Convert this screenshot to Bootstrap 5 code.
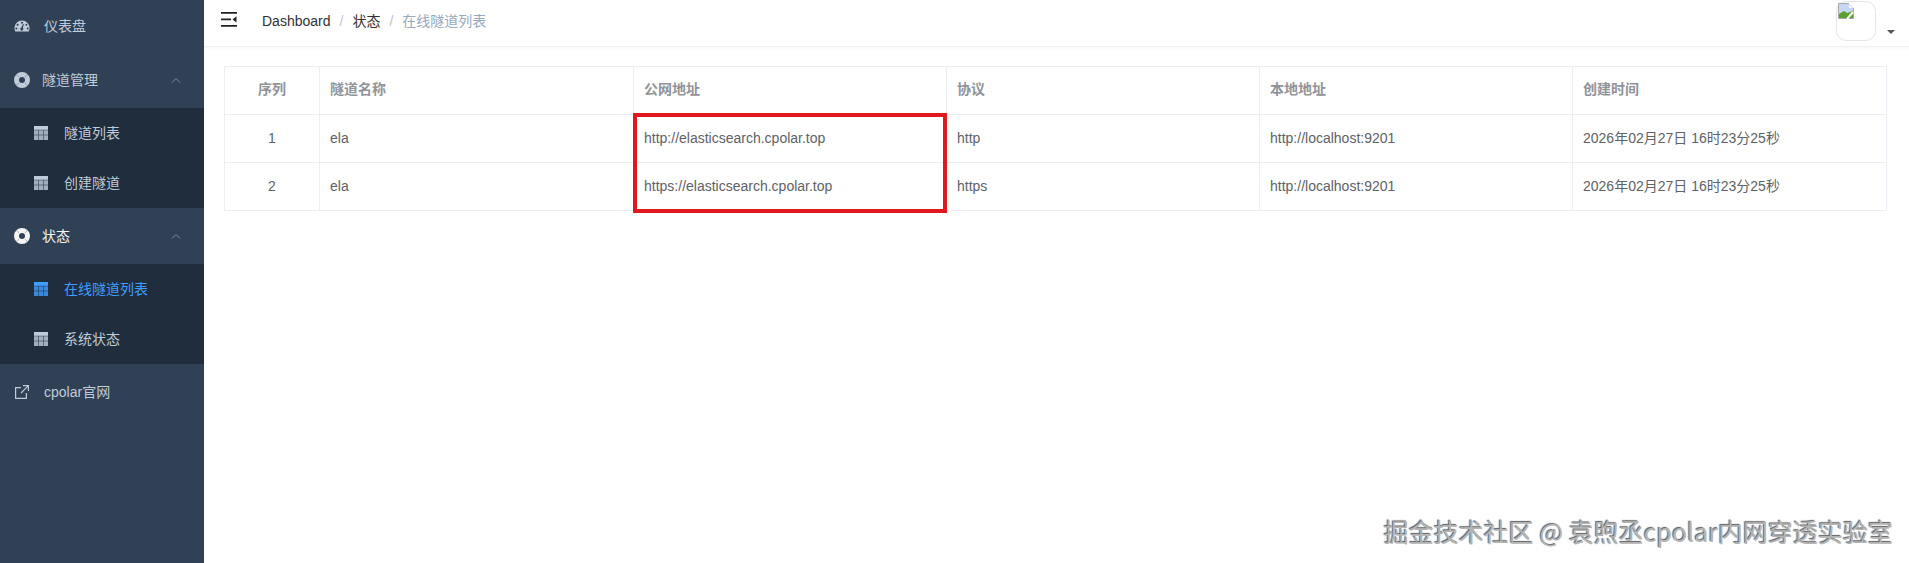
<!DOCTYPE html>
<html lang="zh-CN">
<head>
    <meta charset="UTF-8">
    <meta name="viewport" content="width=device-width, initial-scale=1.0">
    <title>在线隧道列表</title>
    <link href="https://cdn.jsdelivr.net/npm/bootstrap@5.3.0/dist/css/bootstrap.min.css" rel="stylesheet">
    <style>
        html, body { height: 100%; overflow: hidden; }
        body { font-family: "Liberation Sans", "Noto Sans CJK SC", sans-serif; font-size: 14px; color: #606266; }
        .app-shell { height: 563px; position: relative; }
        .side-menu { width: 204px; background: #304156; color: #bfcbd9; flex: none; }
        .side-item { height: 56px; padding-left: 14px; color: #bfcbd9; text-decoration: none; }
        .side-item.first-item { height: 52px; }
        .side-item svg { width: 16px; height: 16px; margin-right: 14px; fill: currentColor; flex: none; }
        .side-group svg { margin-right: 12px; }
        .side-group.open-now { color: #f4f4f5; }
        .side-ring-cut { stroke: #304156; stroke-width: .9; opacity: .4; }
        .side-chevron { width: 10px !important; height: 6px !important; margin: 0 23px 0 auto !important; fill: none !important; stroke: #7d8b9b; stroke-width: 1; }
        .side-sub { background: #1f2d3d; }
        .side-sub a { height: 50px; padding-left: 34px; color: #bfcbd9; text-decoration: none; }
        .side-sub a svg { width: 14px; height: 14px; margin-right: 16px; flex: none; }
        .side-sub a svg .grid-cells { fill: currentColor; opacity: .82; }
        .side-sub a svg .grid-head { fill: currentColor; }
        .side-sub a.is-active { color: #409eff; }
        .top-strip { height: 47px; border-bottom: 1px solid #f0f1f3; box-shadow: 0 1px 3px rgba(0, 21, 41, .04); padding-left: 17px; }
        .fold-icon { width: 16px; height: 16px; margin: 11px 25px 0 0; }
        .crumbs { margin-top: 11px; }
        .crumbs .breadcrumb-item { font-size: 14px; color: #97a8be; }
        .crumbs .breadcrumb-item a { color: #303133; text-decoration: none; }
        .crumbs .breadcrumb-item + .breadcrumb-item { padding-left: 9px; }
        .crumbs .breadcrumb-item + .breadcrumb-item::before { color: #c0c4cc; padding-right: 9px; }
        .avatar-box { width: 40px; height: 40px; border: 1px solid #e2e4e6; border-radius: 10px; margin-top: 1px; padding: 1px 0 0 1px; }
        .avatar-box svg { display: block; width: 16px; height: 16px; }
        .avatar-caret { border-top: 4px solid #555; border-left: 4px solid transparent; border-right: 4px solid transparent; margin: 30px 15px 0 11px; }
        .tunnel-wrap { padding: 19px 23px 0 20px; position: relative; }
        .tunnel-table { table-layout: fixed; width: 1662px; margin: 0; border-color: #ebeef5; color: #606266; }
        .tunnel-table th, .tunnel-table td { height: 48px; padding: 0 10px; vertical-align: middle; font-size: 14px; font-weight: 400; color: #606266; }
        .tunnel-table th { color: #909399; font-weight: 700; padding-bottom: 2px; }
        .red-frame { position: absolute; left: 429px; top: 66px; width: 314px; height: 100px; border: 4px solid #e1191f; }
        .site-mark { position: absolute; right: 16px; bottom: 18px; font-family: "Noto Sans CJK SC", sans-serif; font-size: 25px; line-height: 28px; color: #b4b4b4; text-shadow: -1px -1px 1px #5e5e5e; }
    </style>
</head>
<body>
<div class="app-shell d-flex">
    <aside class="side-menu">
        <a href="#" class="side-item first-item d-flex align-items-center">
            <svg viewBox="0 0 16 16"><path d="M8 2.5a7.6 7.6 0 0 0-7.6 7.6c0 1.300.3 2.400.9 3.400h13.400c.6-1 .9-2.100.9-3.400A7.600 7.600 0 0 0 8 2.500zm0 1.300a1 1 0 1 1 0 2 1 1 0 0 1 0-2zM3.600 5.700a1 1 0 1 1 0 2 1 1 0 0 1 0-2zm8.800 0a1 1 0 1 1 0 2 1 1 0 0 1 0-2zM2.300 9.600a1 1 0 1 1 0 2 1 1 0 0 1 0-2zm11.400 0a1 1 0 1 1 0 2 1 1 0 0 1 0-2zM9.800 6 8.900 10a1.500 1.500 0 1 1-1.500-.4L9 6z"/></svg>
            仪表盘
        </a>
        <a href="#" class="side-item side-group d-flex align-items-center">
            <svg viewBox="0 0 16 16"><path fill-rule="evenodd" d="M8 0a8 8 0 1 1 0 16A8 8 0 0 1 8 0zm0 5a3 3 0 1 0 0 6 3 3 0 0 0 0-6z"/><path class="side-ring-cut" d="m2.300 2.300 2.700 2.700M13.700 2.300 11 5M2.300 13.700 5 11M13.700 13.700 11 11"/></svg>
            隧道管理
            <svg class="side-chevron" viewBox="0 0 10 6"><path d="M1 5.500 5 1.500l4 4"/></svg>
        </a>
        <div class="side-sub">
            <a href="#" class="d-flex align-items-center"><svg viewBox="0 0 14 14"><path class="grid-head" d="M0 0h14v3.800H0z"/><path class="grid-cells" d="M0 4.300h4.300v4.500H0zM4.800 4.300h4.400v4.500H4.800zM9.700 4.300H14v4.500H9.700zM0 9.300h4.300V14H0zM4.800 9.300h4.400V14H4.800zM9.700 9.300H14V14H9.700z"/></svg>隧道列表</a>
            <a href="#" class="d-flex align-items-center"><svg viewBox="0 0 14 14"><path class="grid-head" d="M0 0h14v3.800H0z"/><path class="grid-cells" d="M0 4.300h4.300v4.500H0zM4.800 4.300h4.400v4.500H4.800zM9.700 4.300H14v4.500H9.700zM0 9.300h4.300V14H0zM4.800 9.300h4.400V14H4.800zM9.700 9.300H14V14H9.700z"/></svg>创建隧道</a>
        </div>
        <a href="#" class="side-item side-group open-now d-flex align-items-center">
            <svg viewBox="0 0 16 16"><path fill-rule="evenodd" d="M8 0a8 8 0 1 1 0 16A8 8 0 0 1 8 0zm0 5a3 3 0 1 0 0 6 3 3 0 0 0 0-6z"/><path class="side-ring-cut" d="m2.300 2.300 2.700 2.700M13.700 2.300 11 5M2.300 13.700 5 11M13.700 13.700 11 11"/></svg>
            状态
            <svg class="side-chevron" viewBox="0 0 10 6"><path d="M1 5.500 5 1.500l4 4"/></svg>
        </a>
        <div class="side-sub">
            <a href="#" class="is-active d-flex align-items-center"><svg viewBox="0 0 14 14"><path class="grid-head" d="M0 0h14v3.800H0z"/><path class="grid-cells" d="M0 4.300h4.300v4.500H0zM4.800 4.300h4.400v4.500H4.800zM9.700 4.300H14v4.500H9.700zM0 9.300h4.300V14H0zM4.800 9.300h4.400V14H4.800zM9.700 9.300H14V14H9.700z"/></svg>在线隧道列表</a>
            <a href="#" class="d-flex align-items-center"><svg viewBox="0 0 14 14"><path class="grid-head" d="M0 0h14v3.800H0z"/><path class="grid-cells" d="M0 4.300h4.300v4.500H0zM4.800 4.300h4.400v4.500H4.800zM9.700 4.300H14v4.500H9.700zM0 9.300h4.300V14H0zM4.800 9.300h4.400V14H4.800zM9.700 9.300H14V14H9.700z"/></svg>系统状态</a>
        </div>
        <a href="#" class="side-item d-flex align-items-center">
            <svg viewBox="0 0 16 16"><path d="M1 3h6v1.200H2.200v9.600h9.600V9H13v6H1zM9 1h6v6h-1.200V3L7.400 9.400l-.8-.8L13 2.200H9z"/></svg>
            cpolar官网
        </a>
    </aside>
    <main class="flex-grow-1">
        <div class="top-strip d-flex align-items-start">
            <svg class="fold-icon" viewBox="0 0 16 16"><path fill="#222" d="M0 1h16v1.800H0zM0 7.500h10v1.800H0zM0 14h16v1.800H0zM11.500 8.400 15.500 5.200v6.400z"/></svg>
            <nav class="crumbs" aria-label="breadcrumb">
                <ol class="breadcrumb mb-0">
                    <li class="breadcrumb-item"><a href="#">Dashboard</a></li>
                    <li class="breadcrumb-item"><a href="#">状态</a></li>
                    <li class="breadcrumb-item active" aria-current="page">在线隧道列表</li>
                </ol>
            </nav>
            <div class="avatar-box ms-auto">
                <svg viewBox="0 0 16 16"><path fill="#c6d6f4" stroke="#a9a9a9" d="M.5.500h10l5 5v10H.500z"/><path fill="#fff" d="M11 1v4h4z"/><path fill="#5aa02c" d="M1 15V11l5-3 3 2 6-2v7z"/><path stroke="#fff" stroke-width="2" d="m9 16 6-7"/></svg>
            </div>
            <span class="avatar-caret"></span>
        </div>
        <div class="tunnel-wrap">
            <table class="table table-bordered tunnel-table">
                <colgroup><col style="width:95px"><col style="width:314px"><col style="width:313px"><col style="width:313px"><col style="width:313px"><col style="width:314px"></colgroup>
                <thead>
                <tr><th class="text-center">序列</th><th>隧道名称</th><th>公网地址</th><th>协议</th><th>本地地址</th><th>创建时间</th></tr>
                </thead>
                <tbody id="tunnelRows"></tbody>
            </table>
            <div class="red-frame"></div>
        </div>
    </main>
    <div class="site-mark">掘金技术社区 @ 袁煦丞cpolar内网穿透实验室</div>
</div>
<script src="https://cdn.jsdelivr.net/npm/bootstrap@5.3.0/dist/js/bootstrap.bundle.min.js"></script>
<script>
    const tunnels = [
        ['1', 'ela', 'http://elasticsearch.cpolar.top', 'http', 'http://localhost:9201', '2026年02月27日 16时23分25秒'],
        ['2', 'ela', 'https://elasticsearch.cpolar.top', 'https', 'http://localhost:9201', '2026年02月27日 16时23分25秒']
    ];
    document.getElementById('tunnelRows').innerHTML = tunnels.map(row =>
        `<tr>${row.map((cell, i) => `<td${i === 0 ? ' class="text-center"' : ''}>${cell}</td>`).join('')}</tr>`
    ).join('');
</script>
</body>
</html>
